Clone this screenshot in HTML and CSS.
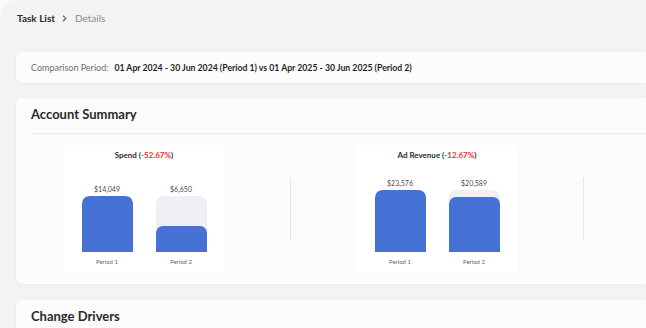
FILE: index.html
```html
<!DOCTYPE html>
<html lang="en">
<head>
    <meta charset="UTF-8">
    <meta name="viewport" content="width=device-width, initial-scale=1.0">
    <title>Task Details</title>
    <link rel="stylesheet" href="styles.css">
</head>
<body>

<div class="app">
    <div class="breadcrumb">
        <span class="crumb-root">Task List</span>
        <svg class="crumb-sep" width="5" height="7" viewBox="0 0 5 7"><path d="M1 0.8 L3.8 3.5 L1 6.2" fill="none" stroke="#6a6a6a" stroke-width="1.3"/></svg>
        <span class="crumb-current">Details</span>
    </div>

    <div class="period-card">
        <span class="period-label">Comparison Period:</span>
        <span class="period-value">01 Apr 2024 - 30 Jun 2024 (Period 1) vs 01 Apr 2025 - 30 Jun 2025 (Period 2)</span>
    </div>

    <div class="card">
        <div class="card-head">Account Summary</div>
        <div class="chart-row">
            <div class="chart-box">
                <div class="chart-title">Spend (<span class="neg">-52.67%</span>)</div>
                <div class="bars">
                    <div class="bar-col">
                        <div class="bar-value">$14,049</div>
                        <div class="bar-track" style="height: 56px"><div class="bar-fill" style="height: 56px"></div></div>
                        <div class="bar-label">Period 1</div>
                    </div>
                    <div class="bar-col">
                        <div class="bar-value">$6,650</div>
                        <div class="bar-track" style="height: 56px"><div class="bar-fill" style="height: 26px"></div></div>
                        <div class="bar-label">Period 2</div>
                    </div>
                </div>
            </div>
            <div class="chart-divider"></div>
            <div class="chart-box">
                <div class="chart-title">Ad Revenue (<span class="neg">-12.67%</span>)</div>
                <div class="bars">
                    <div class="bar-col">
                        <div class="bar-value">$23,576</div>
                        <div class="bar-track" style="height: 62px"><div class="bar-fill" style="height: 62px"></div></div>
                        <div class="bar-label">Period 1</div>
                    </div>
                    <div class="bar-col">
                        <div class="bar-value">$20,589</div>
                        <div class="bar-track" style="height: 62px"><div class="bar-fill" style="height: 55px"></div></div>
                        <div class="bar-label">Period 2</div>
                    </div>
                </div>
            </div>
            <div class="chart-divider"></div>
        </div>
    </div>

    <div class="card">
        <div class="card-head">Change Drivers</div>
    </div>
</div>

</body>
</html>
```

FILE: styles.css
```css
body {
    margin: 0;
    background-color: #fbfbfb;
    font-family: Lato, "Open Sans", sans-serif;
    color: #2b2b2b;
    overflow: hidden;
}
.app {
    height: 100vh;
    overflow: hidden;
    background-color: #f3f3f3;
    border-radius: 18px 0 0 0;
    box-shadow: 0 0 6px rgba(0, 0, 0, 0.04);
    padding-left: 16px;
    box-sizing: border-box;
}
.breadcrumb {
    height: 36px;
    display: flex;
    align-items: center;
    padding-left: 1px;
    font-size: 10px;
}
.crumb-root {
    font-weight: 700;
    color: #2b2b2b;
}
.crumb-sep {
    margin: 0 8px 0 7px;
}
.crumb-current {
    color: #8a8a8a;
}
.period-card {
    margin-top: 16px;
    height: 31px;
    display: flex;
    align-items: center;
    padding: 0 15px;
    background-color: #fcfcfc;
    border-radius: 6px 0 0 6px;
    box-shadow: 0 1px 4px rgba(0, 0, 0, 0.04);
    font-size: 9px;
}
.period-label {
    color: #6e6e6e;
    margin-right: 6px;
}
.period-value {
    font-weight: 700;
    color: #1f1f1f;
    font-size: 8.7px;
}
.card {
    margin-top: 15px;
    padding: 0 0 0 15px;
    background-color: #fcfcfc;
    border-radius: 6px 0 0 6px;
    box-shadow: 0 1px 4px rgba(0, 0, 0, 0.04);
}
.card + .card {
    margin-top: 16px;
}
.card-head {
    height: 36px;
    box-sizing: border-box;
    padding-top: 7px;
    line-height: 18px;
    font-size: 13px;
    font-weight: 700;
    color: #2a2a2a;
    border-bottom: 1px solid #ececec;
}
.chart-row {
    display: flex;
    align-items: center;
    gap: 65px;
    padding: 11px 0 11px 32px;
}
.chart-box {
    width: 162px;
    height: 128px;
    box-sizing: border-box;
    background-color: #ffffff;
    border-radius: 3px;
    display: flex;
    flex-direction: column;
    padding: 5px 0 6px;
}
.chart-title {
    text-align: center;
    font-size: 8px;
    font-weight: 700;
    line-height: 10px;
    color: #2b2b2b;
}
.neg {
    color: #f22b2b;
}
.bars {
    flex: 1;
    display: flex;
    justify-content: center;
    align-items: flex-end;
    gap: 23px;
}
.bar-col {
    width: 51px;
    display: flex;
    flex-direction: column;
    align-items: center;
}
.bar-value {
    font-size: 7px;
    line-height: 10px;
    color: #4a4a4a;
    margin-bottom: 2px;
}
.bar-track {
    width: 51px;
    background-color: #eef0f6;
    border-radius: 7px 7px 0 0;
    display: flex;
    align-items: flex-end;
    overflow: hidden;
}
.bar-fill {
    width: 100%;
    background-color: #4572d4;
    border-radius: 7px 7px 0 0;
}
.bar-label {
    margin-top: 5px;
    font-size: 6px;
    line-height: 10px;
    color: #666666;
}
.chart-divider {
    width: 1px;
    height: 62px;
    background-color: #e8e8e8;
}
```
